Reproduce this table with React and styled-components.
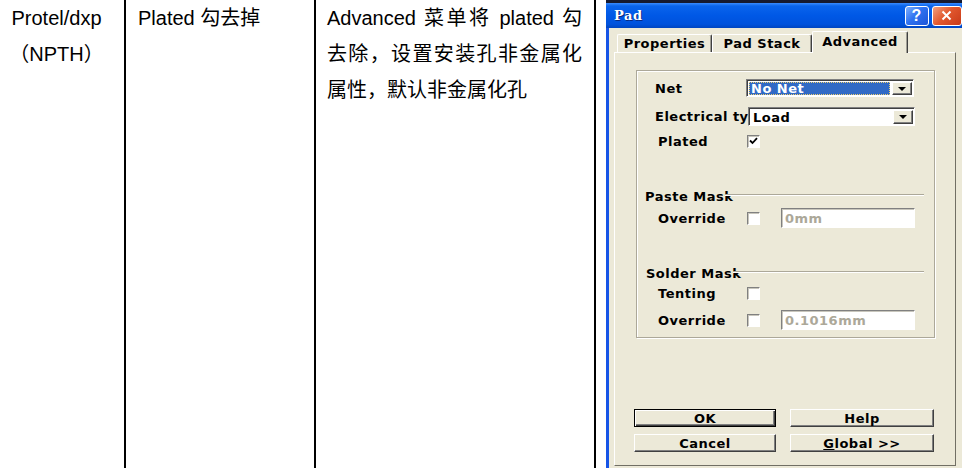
import React from 'react'
import styled, { createGlobalStyle } from 'styled-components'

const GlobalStyle = createGlobalStyle`
  html, body {
    margin: 0;
    padding: 0;
    background: #fff;
    overflow: hidden;
  }
`

const Page = styled.div`
  display: flex;
  width: 962px;
  height: 468px;
  overflow: hidden;
  background: #fff;
`

const Cell = styled.div`
  flex: 0 0 ${p => p.w}px;
  box-sizing: border-box;
  height: 468px;
  border-right: 2px solid #000;
  padding: 0 ${p => p.pr || 0}px 0 ${p => p.pl || 0}px;
  font-family: "Liberation Sans", "Noto Sans CJK SC", sans-serif;
  font-size: 20px;
  line-height: 36px;
  color: #000;
  text-align: ${p => p.align || 'left'};
  text-align-last: left;
`

const CenterCell = styled(Cell)`
  text-align-last: center;
`

// ---- dialog ----
const UI = `"DejaVu Sans", "Liberation Sans", sans-serif`

const Dialog = styled.div`
  margin-left: 10px;
  flex: 0 0 362px;
  height: 468px;
  box-sizing: border-box;
  border-top: 3px solid #161a30;
  display: flex;
  flex-direction: column;
  font-family: ${UI};
  font-weight: bold;
  font-size: 13px;
  letter-spacing: 0.5px;
  color: #000;
`

const TitleBar = styled.div`
  height: 25px;
  flex: 0 0 25px;
  display: flex;
  align-items: center;
  padding-left: 8px;
  background: linear-gradient(#3a8cff 0%, #0a64ec 12%, #0058e6 50%, #0052dc 85%, #0046c0 100%);
`

const Title = styled.span`
  font-family: "DejaVu Serif", "Liberation Serif", serif;
  font-size: 13px;
  font-weight: bold;
  letter-spacing: 0.6px;
  color: #fff;
  text-shadow: 1px 1px 0 #0a2a80;
`

const CapButton = styled.div`
  width: ${p => p.w}px;
  height: 20px;
  margin-left: ${p => p.ml || 0}px;
  border: 1px solid #fff;
  border-radius: 3px;
  box-sizing: border-box;
  display: flex;
  align-items: center;
  justify-content: center;
  background: ${p => p.close
    ? 'linear-gradient(135deg, #f0a080 0%, #e2582e 45%, #c83a18 100%)'
    : 'linear-gradient(135deg, #7fb0ff 0%, #2f72f0 45%, #1d55d8 100%)'};
  color: #fff;
  font-family: "Liberation Sans", sans-serif;
  font-size: 16px;
  font-weight: bold;
`

const Body = styled.div`
  flex: 1;
  display: flex;
  flex-direction: column;
  background: #ece9d8;
  border-left: 3px solid #1654e6;
  padding: 3px 0 2px 5px;
`

const TabStrip = styled.div`
  display: flex;
  align-items: flex-end;
  height: 21px;
  padding-left: 3px;
  position: relative;
  z-index: 1;
`

const Tab = styled.div`
  width: ${p => p.w}px;
  height: ${p => (p.active ? 22 : 18)}px;
  margin-bottom: ${p => (p.active ? -1 : 0)}px;
  box-sizing: border-box;
  border-top: 1px solid #fff;
  border-left: 1px solid #fff;
  border-right: 1px solid #404040;
  box-shadow: inset -1px 0 0 #a09e94;
  border-radius: 2px 2px 0 0;
  background: #ece9d8;
  display: flex;
  align-items: ${p => (p.active ? 'flex-start' : 'center')};
  padding-top: ${p => (p.active ? 2 : 0)}px;
  justify-content: center;
`

const Panel = styled.div`
  width: 342px;
  flex: 1;
  box-sizing: border-box;
  border-top: 1px solid #fff;
  border-left: 1px solid #fff;
  border-right: 1px solid #716f64;
  border-bottom: 1px solid #716f64;
  padding: 17px 0 13px 19px;
  display: flex;
  flex-direction: column;
`

const Group = styled.div`
  width: 299px;
  height: 268px;
  margin-left: 2px;
  box-sizing: border-box;
  border: 1px solid #aca899;
  box-shadow: inset 1px 1px 0 #fff, 1px 1px 0 #fff;
  padding: 8px 0 0 0;
  display: flex;
  flex-direction: column;
`

const Row = styled.div`
  display: flex;
  align-items: center;
  height: ${p => p.h}px;
  margin-top: ${p => p.mt || 0}px;
  padding-left: ${p => p.indent}px;
`

const Label = styled.div`
  width: ${p => p.w}px;
  flex: 0 0 ${p => p.w}px;
  white-space: nowrap;
`

const Heading = styled.div`
  display: flex;
  align-items: center;
  height: 14px;
  margin-top: ${p => p.mt}px;
  padding-left: ${p => p.indent}px;
  margin-right: 10px;
`

const Etched = styled.div`
  flex: 1;
  height: 0;
  margin-left: -8px;
  margin-top: -3px;
  border-top: 1px solid #aca899;
  border-bottom: 1px solid #fff;
`

const Combo = styled.div`
  width: ${p => p.w}px;
  height: ${p => p.h}px;
  box-sizing: border-box;
  border: 1px solid;
  border-color: #808080 #fff #fff #808080;
  box-shadow: inset 1px 1px 0 #404040;
  background: #fff;
  display: flex;
  align-items: stretch;
  padding: 2px 1px 1px 2px;
`

const ComboValue = styled.div`
  flex: 1;
  display: flex;
  align-items: center;
  padding-left: 2px;
  margin-right: 2px;
  background: ${p => (p.selected ? '#316ac5' : 'transparent')};
  color: ${p => (p.selected ? '#fff' : '#000')};
  outline: ${p => (p.selected ? '1px dotted #f0d070' : 'none')};
  outline-offset: -1px;
`

const ArrowBtn = styled.div`
  width: 20px;
  box-sizing: border-box;
  background: #ece9d8;
  border: 1px solid;
  border-color: #fff #404040 #404040 #fff;
  box-shadow: inset -1px -1px 0 #808080;
  display: flex;
  align-items: center;
  justify-content: center;
`

const Check = styled.div`
  width: 13px;
  height: 13px;
  flex: 0 0 13px;
  box-sizing: border-box;
  border: 1px solid;
  border-color: #808080 #fff #fff #808080;
  box-shadow: inset 1px 1px 0 #c8c6bc;
  background: #fff;
  display: flex;
  align-items: center;
  justify-content: center;
`

const TextBox = styled.div`
  width: 134px;
  height: 20px;
  margin-left: ${p => p.ml}px;
  box-sizing: border-box;
  border: 1px solid;
  border-color: #808080 #fff #fff #808080;
  box-shadow: inset 1px 1px 0 #c8c6bc;
  background: #fff;
  color: #aca899;
  padding-left: 3px;
  display: flex;
  align-items: center;
`

const Buttons = styled.div`
  margin-top: auto;
  display: grid;
  grid-template-columns: 142px 144px;
  column-gap: 14px;
  row-gap: 7px;
`

const Btn = styled.div`
  height: ${p => p.h}px;
  box-sizing: border-box;
  background: #ece9d8;
  border: 1px solid;
  border-color: ${p => (p.def ? '#000' : '#fff #404040 #404040 #fff')};
  box-shadow: ${p => (p.def
    ? 'inset 1px 1px 0 #fff, inset -1px -1px 0 #404040, inset -2px -2px 0 #808080'
    : 'inset -1px -1px 0 #808080')};
  display: flex;
  align-items: center;
  justify-content: center;
`

const Mnemonic = styled.span`
  text-decoration: underline;
`

const Arrow = () => (
  <svg width="8" height="4" viewBox="0 0 8 4">
    <path d="M0 0h8L4 4z" fill="#000" />
  </svg>
)

const Tick = () => (
  <svg width="9" height="8" viewBox="0 0 9 8">
    <path d="M1 3.5l2.5 2.5L8 1.2" stroke="#000" strokeWidth="1.8" fill="none" />
  </svg>
)

function PadDialog() {
  return (
    <Dialog>
      <TitleBar>
        <Title>Pad</Title>
        <CapButton w={24} ml={262}>?</CapButton>
        <CapButton w={30} close ml={3}>
          <svg width="11" height="11" viewBox="0 0 11 11">
            <path d="M1.5 1.5l8 8M9.5 1.5l-8 8" stroke="#fff" strokeWidth="2" />
          </svg>
        </CapButton>
      </TitleBar>
      <Body>
        <TabStrip>
          <Tab w={95}>Properties</Tab>
          <Tab w={100}>Pad Stack</Tab>
          <Tab w={96} active>Advanced</Tab>
        </TabStrip>
        <Panel>
          <Group>
            <Row h={18} indent={18}>
              <Label w={91}>Net</Label>
              <Combo w={168} h={18}>
                <ComboValue selected>No Net</ComboValue>
                <ArrowBtn><Arrow /></ArrowBtn>
              </Combo>
            </Row>
            <Row h={19} mt={10} indent={18}>
              <Label w={93}>Electrical ty</Label>
              <Combo w={167} h={19}>
                <ComboValue>Load</ComboValue>
                <ArrowBtn><Arrow /></ArrowBtn>
              </Combo>
            </Row>
            <Row h={14} mt={8} indent={21}>
              <Label w={89}>Plated</Label>
              <Check><Tick /></Check>
            </Row>

            <Heading mt={41} indent={8}>
              <span>Paste Mask</span>
              <Etched />
            </Heading>
            <Row h={20} mt={5} indent={21}>
              <Label w={89}>Override</Label>
              <Check />
              <TextBox ml={21}>0mm</TextBox>
            </Row>

            <Heading mt={38} indent={9}>
              <span>Solder Mask</span>
              <Etched />
            </Heading>
            <Row h={14} mt={6} indent={21}>
              <Label w={89}>Tenting</Label>
              <Check />
            </Row>
            <Row h={20} mt={10} indent={21}>
              <Label w={89}>Override</Label>
              <Check />
              <TextBox ml={21}>0.1016mm</TextBox>
            </Row>
          </Group>

          <Buttons>
            <Btn def h={18}>OK</Btn>
            <Btn h={18}>Help</Btn>
            <Btn h={18}>Cancel</Btn>
            <Btn h={18}><Mnemonic>G</Mnemonic>lobal &gt;&gt;</Btn>
          </Buttons>
        </Panel>
      </Body>
    </Dialog>
  )
}

export default function App() {
  return (
    <>
      <GlobalStyle />
      <Page>
        <CenterCell w={126} pr={11} align="center">
          Protel/dxp<br />（NPTH）
        </CenterCell>
        <Cell w={190} pl={12}>
          Plated 勾去掉
        </Cell>
        <Cell w={280} pl={11} pr={12} align="justify">
          Advanced 菜单将 plated 勾去除，设置安装孔非金属化属性，默认非金属化孔
        </Cell>
        <PadDialog />
      </Page>
    </>
  )
}
